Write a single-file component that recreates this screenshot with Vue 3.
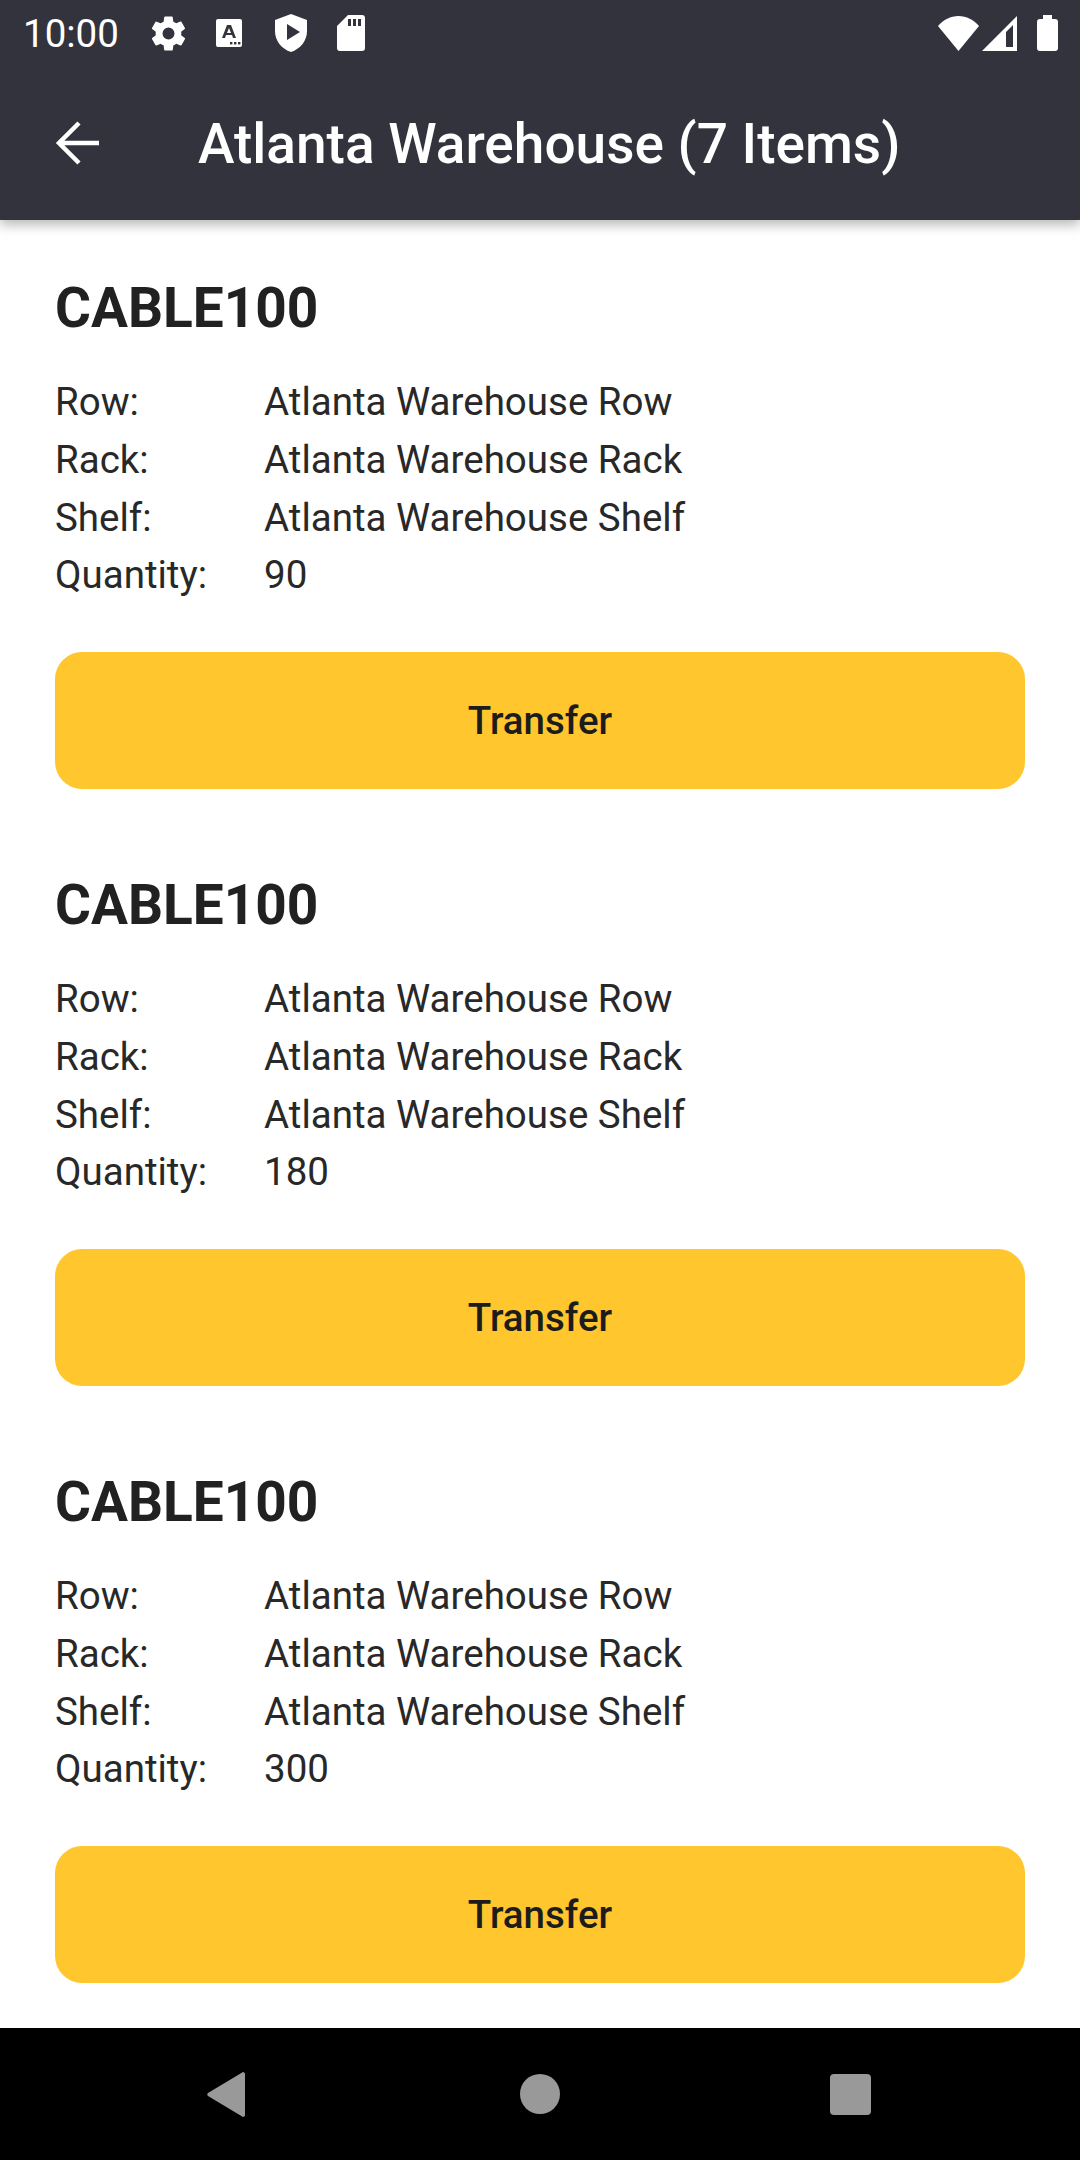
<template>
  <div class="screen">
    <header class="appbar">
      <div class="status">
        <span class="time">10:00</span>
        <div class="status-icons">
          <!-- settings -->
          <svg class="gear" width="41" height="41" viewBox="0 0 24 24"><path fill="#fff" d="M19.4 13c.04-.32.1-.66.1-1s-.06-.68-.1-1l2.100-1.650c.2-.15.25-.42.12-.64l-2-3.460c-.12-.22-.38-.3-.6-.22l-2.500 1c-.52-.4-1.080-.73-1.700-.98l-.37-2.650A.49.49 0 0 0 14 2h-4c-.25 0-.46.18-.49.42l-.38 2.650c-.6.25-1.170.59-1.690.98l-2.490-1c-.23-.09-.49 0-.61.22l-2 3.460c-.13.22-.07.49.12.64L4.560 11c-.04.32-.06.66-.06 1s.02.68.06 1l-2.100 1.650c-.2.15-.25.42-.12.64l2 3.460c.12.22.38.3.6.22l2.500-1c.52.4 1.080.73 1.700.98l.37 2.650c.03.24.24.42.49.42h4c.25 0 .46-.18.49-.42l.38-2.650c.6-.25 1.170-.59 1.690-.98l2.490 1c.23.09.49 0 .61-.22l2-3.460c.13-.22.07-.49-.12-.64zM12 15.500A3.500 3.500 0 1 1 12 8.500a3.500 3.500 0 0 1 0 7z"/></svg>
          <!-- accessibility text tile -->
          <svg class="tile" width="26" height="28" viewBox="0 0 26 28"><path fill="#fff" fill-rule="evenodd" d="M2 0h22a2 2 0 0 1 2 2v24a2 2 0 0 1-2 2H2a2 2 0 0 1-2-2V2a2 2 0 0 1 2-2zm9 6-5 13h3l1-3h6l1 3h3L15 6zm2 3 2 5h-4z"/><rect x="14" y="23" width="2.400" height="2.400" fill="#33333d"/><rect x="18" y="23" width="2.400" height="2.400" fill="#33333d"/><rect x="22" y="23" width="2.400" height="2.400" fill="#33333d"/></svg>
          <!-- play protect -->
          <svg class="shield" width="32" height="38" viewBox="0 0 32 38"><path fill="#fff" fill-rule="evenodd" d="M16 0 32 6v11c0 10-6.800 18-16 21C6.800 35 0 27 0 17V6zm-4 10v16l13-8z"/></svg>
          <!-- sd card -->
          <svg class="sd" width="28" height="36" viewBox="0 0 28 36"><path fill="#fff" fill-rule="evenodd" d="M11 0h14a3 3 0 0 1 3 3v30a3 3 0 0 1-3 3H3a3 3 0 0 1-3-3V11zM11 4v7h3V4zm5 0v7h3V4zm5 0v7h3V4z"/></svg>
        </div>
        <div class="status-right">
          <svg width="41" height="35" viewBox="0 0 41 35"><path fill="#fff" d="M0 10C5.500 3.800 12.500 0 20.500 0S35.500 3.800 41 10L20.500 35z"/></svg>
          <svg width="35" height="35" viewBox="0 0 35 35"><path fill="#fff" fill-rule="evenodd" d="M35 0v35H0zM31 9l-7 7v15h7z"/></svg>
          <svg class="battery" width="21" height="36" viewBox="0 0 21 36"><path fill="#fff" d="M6 0h9v4h3a3 3 0 0 1 3 3v26a3 3 0 0 1-3 3H3a3 3 0 0 1-3-3V7a3 3 0 0 1 3-3h3z"/></svg>
        </div>
      </div>
      <div class="toolbar">
        <svg class="back" width="44" height="44" viewBox="0 0 44 44"><path fill="none" stroke="#fff" stroke-width="4.500" d="M44 22H4M24 2 4 22l20 20"/></svg>
        <h1>Atlanta Warehouse (7 Items)</h1>
      </div>
    </header>

    <main class="list">
      <section v-for="(item, i) in items" :key="i" class="item">
        <h2>{{ item.sku }}</h2>
        <div class="details">
          <div class="row" v-for="f in fields(item)" :key="f[0]">
            <span class="label">{{ f[0] }}</span><span>{{ f[1] }}</span>
          </div>
        </div>
        <button class="transfer">Transfer</button>
      </section>
    </main>

    <footer class="navbar">
      <svg width="38" height="45" viewBox="0 0 38 45"><path fill="#999" d="M36 0c1 0 2 1 2 2v41c0 1-1 2-2 2L1 24c-1-1-1-2 0-3z"/></svg>
      <div class="home"></div>
      <div class="recents"></div>
    </footer>
  </div>
</template>

<script setup>
const items = [
  { sku: "CABLE100", qty: 90 },
  { sku: "CABLE100", qty: 180 },
  { sku: "CABLE100", qty: 300 },
];

function fields(item) {
  return [
    ["Row:", "Atlanta Warehouse Row"],
    ["Rack:", "Atlanta Warehouse Rack"],
    ["Shelf:", "Atlanta Warehouse Shelf"],
    ["Quantity:", item.qty],
  ];
}
</script>

<style>
body {
  margin: 0;
  background: #fff;
}
</style>

<style scoped>
.screen {
  width: 1080px;
  height: 2160px;
  display: flex;
  flex-direction: column;
  overflow: hidden;
  font-family: Roboto, "Liberation Sans", sans-serif;
  color: #212121;
  background: #fff;
}
.appbar {
  height: 220px;
  flex: none;
  background: #33333d;
  box-shadow: 0 5px 11px rgba(0, 0, 0, 0.28);
  position: relative;
  z-index: 1;
  color: #fff;
}
.status {
  height: 66px;
  display: flex;
  align-items: center;
  padding: 0 22px 0 23px;
}
.time {
  font-size: 38.500px;
  font-weight: 400;
  width: 125px;
  flex: none;
}
.status-icons {
  display: flex;
  align-items: center;
}
.tile {
  margin-left: 27px;
}
.shield {
  margin-left: 33px;
}
.sd {
  margin-left: 30px;
}
.status-right {
  margin-left: auto;
  display: flex;
  align-items: center;
  gap: 3px;
}
.battery {
  margin-left: 17px;
}
.toolbar {
  height: 154px;
  display: flex;
  align-items: center;
  padding-left: 55px;
}
.back {
  flex: none;
}
h1 {
  margin: 2px 0 0 99px;
  font-size: 55px;
  font-weight: 500;
  line-height: 1;
  white-space: nowrap;
}
.list {
  flex: 1;
  min-height: 0;
  overflow: hidden;
  padding: 55px 55px 0;
}
.item {
  margin-bottom: 83px;
}
h2 {
  margin: 0;
  font-size: 55px;
  font-weight: 700;
  line-height: 66px;
}
.details {
  margin-top: 32px;
  font-size: 38.500px;
  line-height: 57.750px;
  font-weight: 400;
  color: #282828;
}
.row {
  display: flex;
}
.label {
  width: 209px;
  flex: none;
}
.transfer {
  display: block;
  width: 100%;
  height: 137.500px;
  margin-top: 47.500px;
  border: 0;
  border-radius: 27px;
  background: #ffc62e;
  color: #1c1c1c;
  font-family: inherit;
  font-size: 38.500px;
  font-weight: 500;
}
.navbar {
  height: 132px;
  flex: none;
  background: #000;
  display: flex;
  align-items: center;
  padding-left: 207px;
}
.home {
  width: 40px;
  height: 40px;
  margin-left: 275px;
  border-radius: 50%;
  background: #999;
}
.recents {
  width: 41px;
  height: 41px;
  margin-left: 270px;
  border-radius: 4px;
  background: #999;
}
</style>
